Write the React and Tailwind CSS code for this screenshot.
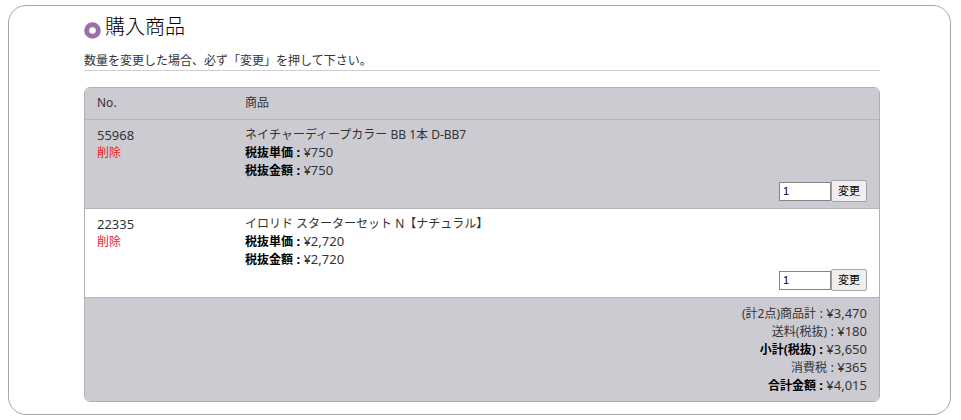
import React from "react";

const items = [
  {
    no: "55968",
    name: "ネイチャーディープカラー BB 1本 D-BB7",
    unit: "¥750",
    amount: "¥750",
    row: "bg-[#cdcbd2]",
  },
  {
    no: "22335",
    name: "イロリド スターターセット N【ナチュラル】",
    unit: "¥2,720",
    amount: "¥2,720",
    row: "bg-white",
  },
];

const totals = [
  { label: "(計2点)商品計", value: "¥3,470" },
  { label: "送料(税抜)", value: "¥180" },
  { label: "小計(税抜)", value: "¥3,650", strong: true },
  { label: "消費税", value: "¥365" },
  { label: "合計金額", value: "¥4,015", strong: true },
];

const Price = ({ label, value, strong }) => {
  return (
    <p>
      <span className={strong ? "font-bold text-black" : ""}>
        {label}
        <span className="text-[13px] leading-none"> : </span>
      </span>
      <span className="text-[13px] leading-none">{value}</span>
    </p>
  );
};

const CartRow = ({ item }) => {
  return (
    <tr className={`align-top border-t border-[#b5b4b7] ${item.row}`}>
      <td className="px-3 pt-[6px]">
        <p className="text-[13px]">{item.no}</p>
        <a href="#delete" className="text-[#ee2229]">
          削除
        </a>
      </td>
      <td className="px-3 pt-[6px] pb-[6px]">
        <p>{item.name}</p>
        <Price label="税抜単価" value={item.unit} strong />
        <Price label="税抜金額" value={item.amount} strong />
        <form
          className="flex justify-end items-center"
          onSubmit={(e) => e.preventDefault()}
        >
          <input
            type="text"
            defaultValue="1"
            aria-label={`${item.name} 数量`}
            className="w-[52px] h-[19px] px-[3px] bg-white border border-[#858585] text-[11px] text-black font-['Liberation_Sans',sans-serif]"
          />
          <button
            type="submit"
            className="w-9 h-[22px] bg-[#efefef] border border-[#a3a3a3] rounded-[2px] text-[11px] leading-4 text-black"
          >
            変更
          </button>
        </form>
      </td>
    </tr>
  );
};

const App = () => {
  return (
    <main className="ml-2 mr-[10px] my-[5px] pl-[75px] pr-[70px] pt-[9px] pb-3 border border-[#a5a5a5] rounded-[18px] bg-white text-xs leading-[18px] text-[#333] font-['Noto_Sans','Noto_Sans_CJK_JP',sans-serif]">
      <h1 className="flex items-center gap-1 text-xl leading-6 font-light text-black">
        <svg viewBox="0 0 17 17" className="w-[17px] h-[17px] mt-[6px]" aria-hidden="true">
          <circle cx="8.5" cy="8.5" r="5.8" fill="#fff" stroke="#9d6fa8" strokeWidth="5" />
        </svg>
        購入商品
      </h1>
      <p className="mt-[13px] border-b border-[#cfcfcf]">
        数量を変更した場合、必ず「変更」を押して下さい。
      </p>
      <div className="mt-4 border border-[#b0afb3] rounded-md overflow-hidden">
        <table className="w-full table-fixed border-collapse text-left">
          <thead>
            <tr className="bg-[#cdcbd2]">
              <th scope="col" className="w-[148px] px-3 pt-[6px] pb-[7px] font-normal">
                No.
              </th>
              <th scope="col" className="px-3 pt-[6px] pb-[7px] font-normal">
                商品
              </th>
            </tr>
          </thead>
          <tbody>
            {items.map((item) => (
              <CartRow key={item.no} item={item} />
            ))}
          </tbody>
          <tfoot>
            <tr className="bg-[#cdcbd2] border-t border-[#b5b4b7]">
              <td colSpan={2} className="px-3 pt-[7px] pb-[6px] text-right">
                {totals.map((t) => (
                  <Price key={t.label} {...t} />
                ))}
              </td>
            </tr>
          </tfoot>
        </table>
      </div>
    </main>
  );
};

export default App;
